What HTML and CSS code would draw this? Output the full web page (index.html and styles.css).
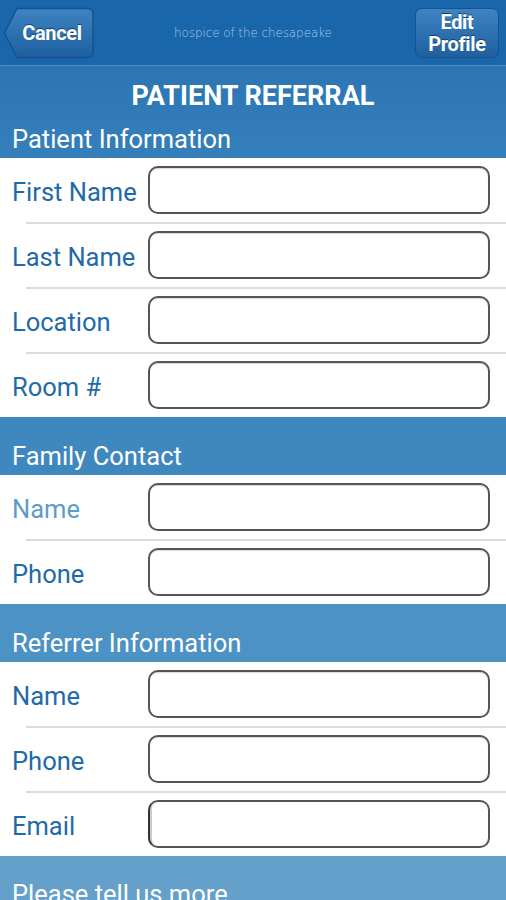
FILE: index.html
```html
<!DOCTYPE html>
<html lang="en">
<head>
	<meta charset="utf-8">
	<title>Patient Referral</title>
	<link rel="stylesheet" href="styles.css">
</head>
<body>
	<div class="topbar">
		<div class="back-btn">
			<svg class="back-shape" width="92" height="52" viewBox="0 0 92 52">
				<defs>
					<linearGradient id="bg1" x1="0" y1="0" x2="0" y2="1">
						<stop offset="0" stop-color="#3f83c2"/>
						<stop offset="1" stop-color="#1d5f9f"/>
					</linearGradient>
				</defs>
				<path d="M14,1.5 H85 a5,5 0 0 1 5,5 V45.5 a5,5 0 0 1 -5,5 H14 L1.5,26 Z" fill="url(#bg1)" stroke="#17528b" stroke-width="1.5"/>
			</svg>
			<span>Cancel</span>
		</div>
		<div class="brand">hospice of the chesapeake</div>
		<div class="edit-btn">Edit<br>Profile</div>
	</div>

	<div class="title-band">
		<h1>PATIENT REFERRAL</h1>
		<div class="section-title">Patient Information</div>
	</div>
	<div class="rows">
		<div class="row"><label>First Name</label><div class="field"></div></div>
		<div class="row"><label>Last Name</label><div class="field"></div></div>
		<div class="row"><label>Location</label><div class="field"></div></div>
		<div class="row"><label>Room #</label><div class="field"></div></div>
	</div>

	<div class="band band-2"><div class="section-title">Family Contact</div></div>
	<div class="rows">
		<div class="row"><label class="dim">Name</label><div class="field"></div></div>
		<div class="row"><label>Phone</label><div class="field"></div></div>
	</div>

	<div class="band band-3"><div class="section-title">Referrer Information</div></div>
	<div class="rows">
		<div class="row"><label>Name</label><div class="field"></div></div>
		<div class="row"><label>Phone</label><div class="field"></div></div>
		<div class="row"><label>Email</label><div class="field caret"></div></div>
	</div>

	<div class="band band-4"><div class="section-title">Please tell us more</div></div>
</body>
</html>
```

FILE: styles.css
```css
body {
	margin: 0;
	font-family: Roboto, "Liberation Sans", sans-serif;
	background: #fff;
	overflow: hidden;
	height: 900px;
}

.topbar {
	height: 66px;
	background: #1a66ab;
	border-bottom: 1px solid #4f8ec8;
	display: flex;
	align-items: center;
	justify-content: space-between;
	padding: 0 7px 0 3px;
	box-sizing: border-box;
}

.back-btn {
	position: relative;
	width: 92px;
	height: 52px;
}
.back-shape {
	position: absolute;
	left: 0;
	top: 0;
}
.back-btn span {
	position: absolute;
	left: 12px;
	top: 0;
	width: 74px;
	line-height: 52px;
	text-align: center;
	color: #fff;
	font-weight: bold;
	font-size: 20px;
	letter-spacing: -0.3px;
	text-shadow: 0 -1px 0 #123f6b;
}

.brand {
	color: #a9c8e6;
	font-family: "DejaVu Sans", sans-serif;
	font-size: 12px;
	font-weight: 300;
	letter-spacing: -0.1px;
	margin-left: -4px;
}

.edit-btn {
	width: 84px;
	height: 50px;
	box-sizing: border-box;
	border: 1.5px solid #17528b;
	border-radius: 7px;
	background: linear-gradient(#3f83c2, #1d5f9f);
	color: #fff;
	font-weight: bold;
	font-size: 20px;
	line-height: 22px;
	letter-spacing: -0.3px;
	text-align: center;
	padding-top: 2px;
	text-shadow: 0 -1px 0 #123f6b;
}

.title-band {
	background: linear-gradient(#2b75b3, #3580bb);
	height: 92px;
	color: #fff;
	padding: 0 12px;
	box-sizing: border-box;
}
.title-band h1 {
	margin: 0;
	padding-top: 14px;
	font-size: 27px;
	line-height: 32px;
	text-align: center;
	font-weight: bold;
}
.title-band .section-title {
	margin-top: 12px;
}

.section-title {
	font-size: 25.5px;
	line-height: 30px;
	color: #fff;
}

.band {
	height: 58px;
	padding: 24px 12px 0;
	box-sizing: border-box;
}
.band-2 { background: #3f88bf; }
.band-3 { background: #4d92c4; }
.band-4 { background: #65a0ca; height: 44px; padding-top: 23px; }

.row {
	display: flex;
	align-items: center;
	padding: 8px 16px 8px 12px;
	position: relative;
}
.row + .row {
	border-top: 2px solid #dcdcdc;
	margin-left: 26px;
	padding-left: 0;
}
.row + .row label {
	margin-left: -14px;
}

.row label {
	width: 136px;
	color: #1f6aa8;
	font-size: 25.5px;
	line-height: 30px;
	padding-top: 3px;
}
.row label.dim {
	color: #5f9bca;
}

.rows .row + .row .field {
	margin-top: -1px;
}
.field {
	flex: 1;
	height: 48px;
	box-sizing: border-box;
	border: 2px solid #555;
	border-radius: 10px;
	background: #fff;
	box-shadow: inset 0 1px 1px rgba(0,0,0,0.15);
}
.field.caret {
	border-left-color: #333;
	box-shadow: inset 9px 0 0 -7px #ccc;
}
```
